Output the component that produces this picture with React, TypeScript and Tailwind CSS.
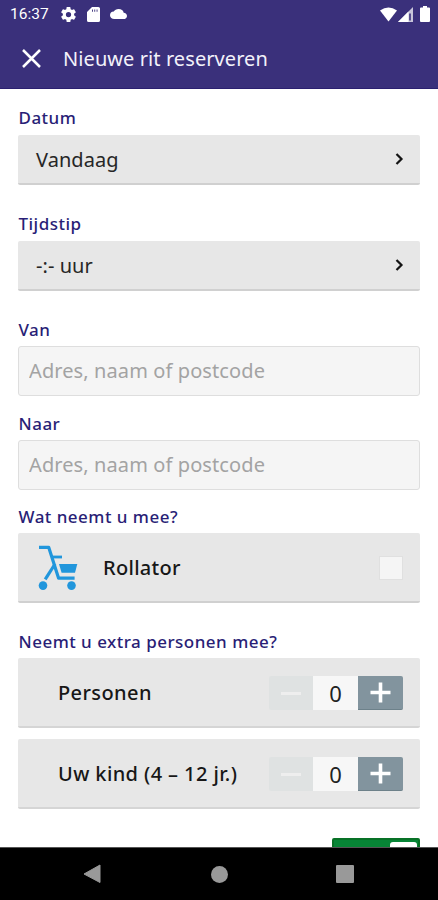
import { useState } from "react";
import type { ReactNode } from "react";

function StatusBar() {
  return (
    <div className="flex h-7 items-center justify-between pr-[8px] pl-[10px] text-white">
      <div className="flex h-full items-center">
        <span className="w-[51px] font-[Roboto] text-[15.5px] leading-7">16:37</span>
        <svg className="h-[15px] w-[15px]" viewBox="2 2 20 20" fill="currentColor">
          <path d="M19.43 12.98c.04-.32.07-.64.07-.98s-.03-.66-.07-.98l2.11-1.65c.19-.15.24-.42.12-.64l-2-3.46c-.12-.22-.39-.3-.61-.22l-2.49 1c-.52-.4-1.08-.73-1.69-.98l-.38-2.65A.49.49 0 0 0 14 2h-4c-.25 0-.46.18-.49.42l-.38 2.65c-.61.25-1.17.59-1.69.98l-2.49-1c-.23-.09-.49 0-.61.22l-2 3.46c-.13.22-.07.49.12.64l2.11 1.65c-.04.32-.07.65-.07.98s.03.66.07.98l-2.11 1.65c-.19.15-.24.42-.12.64l2 3.46c.12.22.39.3.61.22l2.49-1c.52.4 1.08.73 1.69.98l.38 2.65c.03.24.24.42.49.42h4c.25 0 .46-.18.49-.42l.38-2.65c.61-.25 1.17-.59 1.69-.98l2.49 1c.23.09.49 0 .61-.22l2-3.46c.12-.22.07-.49-.12-.64zM12 15.5a3.5 3.5 0 1 1 0-7 3.5 3.5 0 0 1 0 7z" />
        </svg>
        <svg className="ml-[11px] h-[15px] w-[13px]" viewBox="0 0 13 15" fill="currentColor">
          <path
            fillRule="evenodd"
            d="M5 0h6.3Q13 0 13 1.6v11.800q0 1.600-1.700 1.600H1.700Q0 15 0 13.400V5zM5 2.500v2.200h.9v-2.200zM7.300 2.500v2.200h.9v-2.200zM9.600 2.500v2.200h.9v-2.200z"
          />
        </svg>
        <svg className="ml-[10px] h-[10px] w-[17px]" viewBox="0 4 24 16" preserveAspectRatio="none" fill="currentColor">
          <path d="M19.35 10.04A7.49 7.49 0 0 0 12 4C9.11 4 6.6 5.64 5.35 8.04A5.994 5.994 0 0 0 0 14c0 3.31 2.69 6 6 6h13c2.76 0 5-2.24 5-5 0-2.64-2.05-4.78-4.65-4.96z" />
        </svg>
      </div>
      <div className="flex items-center">
        <svg className="h-[15px] w-[17px]" viewBox="0 0 17 15" fill="currentColor">
          <path d="M0 3.600Q8.500-2.800 17 3.600L8.500 14.600z" />
        </svg>
        <svg className="ml-[1px] h-[15px] w-[15px]" viewBox="0 0 15 15">
          <path d="M15 0v15H0z" fill="#ffffff" fillOpacity=".72" />
          <path d="M10.500 4.500V15H0z" fill="#ffffff" />
          <path d="M11.200 6.500h1.600v7h-1.600z" fill="#3a307b" />
        </svg>
        <svg className="ml-[7px] h-[16px] w-[10px]" viewBox="0 0 10 16" fill="currentColor">
          <path d="M3 0h4v1.500h2q1 0 1 1v12.500q0 1-1 1H1q-1 0-1-1V2.500q0-1 1-1h2z" />
        </svg>
      </div>
    </div>
  );
}

function Label({ children }: { children: ReactNode }) {
  return (
    <div className="h-6 pl-[0.5px] text-[17px] leading-6 font-medium tracking-[0.48px] whitespace-nowrap text-[#291e76]">
      {children}
    </div>
  );
}

function PickerRow({ value }: { value: string }) {
  return (
    <button className="flex h-[50px] w-full items-center justify-between rounded-[2px] border-b-2 border-[#d0d0d0] bg-[#e7e7e7] pr-[16px] pl-[18px] text-left text-[20px] tracking-[0.05px] text-[#262626]">
      <span className="pt-[2px]">{value}</span>
      <svg className="h-[12px] w-[9px]" viewBox="0 0 9 12" fill="none" stroke="#141414" strokeWidth="2.200">
        <path d="M1.500 1l5 5-5 5" />
      </svg>
    </button>
  );
}

function AddressInput() {
  return (
    <input
      className="block h-[50px] w-full rounded-[3px] border-[1.5px] border-[#dedede] bg-[#f5f5f5] px-[10px] pb-px text-[20px] tracking-[0.1px] outline-none placeholder:text-[#a3a3a3]"
      placeholder="Adres, naam of postcode"
    />
  );
}

function Rollator() {
  return (
    <svg className="h-[46px] w-[41px]" viewBox="0 0 41 46" fill="none" stroke="#2196dc" strokeWidth="3.200">
      <path d="M2 3.300h9.700l9.900 30.900h16" strokeLinejoin="round" />
      <path d="M15 13h10" strokeWidth="2.800" />
      <path d="M18 20L8.200 35.300" />
      <path d="M22 20h18.300l-2.300 8.800H24.600z" fill="#2196dc" stroke="none" />
      <circle cx="6" cy="41.600" r="4.300" fill="#2196dc" stroke="none" />
      <circle cx="34.500" cy="41.600" r="4.300" fill="#2196dc" stroke="none" />
    </svg>
  );
}

function Counter({ label }: { label: string }) {
  const [count, setCount] = useState(0);
  return (
    <div className="flex h-[70px] items-center justify-between rounded-[2px] border-b-2 border-[#d5d5d5] bg-[#e7e7e7] pt-[2px] pr-[17px] pl-[40px]">
      <span className="text-[20px] font-medium tracking-[0.4px] whitespace-nowrap text-[#171717]">{label}</span>
      <div className="flex h-[34px]">
        <button
          className="flex w-[44px] items-center justify-center rounded-l-[2px] bg-[#dfe2e2]"
          onClick={() => setCount(Math.max(0, count - 1))}
        >
          <span className="h-[3px] w-[20px] bg-[#eeeeee]" />
        </button>
        <span className="flex w-[45px] items-center justify-center bg-[#f7f7f7] text-[22px] text-[#222222]">
          {count}
        </span>
        <button
          className="flex w-[45px] items-center justify-center rounded-r-[2px] border-b border-[#6d818a] bg-[#82949e]"
          onClick={() => setCount(count + 1)}
        >
          <svg className="h-[21px] w-[21px]" viewBox="0 0 21 21" stroke="#ffffff" strokeWidth="3.600">
            <path d="M0.500 10.500h20M10.500 0.500v20" />
          </svg>
        </button>
      </div>
    </div>
  );
}

export default function App() {
  return (
    <div className="flex h-[900px] w-[438px] flex-col overflow-hidden bg-white font-['Noto_Sans',sans-serif]">
      <header className="h-[89px] shrink-0 border-b border-[#2b2070] bg-[#3a307b]">
        <StatusBar />
        <div className="flex h-[61px] items-center pl-[22px]">
          <svg className="h-[19px] w-[19px]" viewBox="0 0 19 19" stroke="#ffffff" strokeWidth="2.500">
            <path d="M1 1l17 17M18 1L1 18" />
          </svg>
          <h1 className="ml-[22px] text-[20px] tracking-[0.08px] whitespace-nowrap text-[#f3f2fa]">
            Nieuwe rit reserveren
          </h1>
        </div>
      </header>

      <main className="min-h-0 flex-1 overflow-hidden px-[18px] pt-[17px]">
        <Label>Datum</Label>
        <div className="mt-[5px]">
          <PickerRow value="Vandaag" />
        </div>
        <div className="mt-[27px]">
          <Label>Tijdstip</Label>
        </div>
        <div className="mt-[5px]">
          <PickerRow value="-:- uur" />
        </div>
        <div className="mt-[27px]">
          <Label>Van</Label>
        </div>
        <div className="mt-[4px]">
          <AddressInput />
        </div>
        <div className="mt-[16px]">
          <Label>Naar</Label>
        </div>
        <div className="mt-[4px]">
          <AddressInput />
        </div>
        <div className="mt-[15px]">
          <Label>Wat neemt u mee?</Label>
        </div>
        <div className="mt-[4px] flex h-[70px] items-center rounded-[2px] border-b-2 border-[#d0d0d0] bg-[#e7e7e7] pr-[17px] pl-[19px]">
          <Rollator />
          <span className="ml-[25px] flex-1 pt-[2px] text-[20px] font-medium tracking-[0.3px] text-[#171717]">
            Rollator
          </span>
          <span className="mt-[2px] h-[24px] w-[24px] border border-[#e0e0e0] bg-[#f5f5f5]" />
        </div>
        <div className="mt-[27px]">
          <Label>Neemt u extra personen mee?</Label>
        </div>
        <div className="mt-[4px] flex flex-col gap-[11px]">
          <Counter label="Personen" />
          <Counter label="Uw kind (4 – 12 jr.)" />
        </div>
        <div className="mt-[29px] ml-auto flex h-[44px] w-[88px] justify-end rounded-[2px] border-2 border-[#087126] bg-[#078536] pt-[2px] pr-[1px]">
          <span className="h-[36px] w-[27px] rounded-[3px] bg-white" />
        </div>
      </main>

      <nav className="flex h-[53px] shrink-0 items-center border-t border-[#555555] bg-black pl-[83px]">
        <svg className="h-[20px] w-[18px]" viewBox="0 0 18 20" fill="#999999">
          <path d="M17 1v17.500L1 10z" stroke="#999999" strokeLinejoin="round" />
        </svg>
        <span className="ml-[110px] h-[17px] w-[17px] rounded-full bg-[#999999]" />
        <span className="ml-[108px] h-[18px] w-[18px] rounded-[1px] bg-[#999999]" />
      </nav>
    </div>
  );
}
